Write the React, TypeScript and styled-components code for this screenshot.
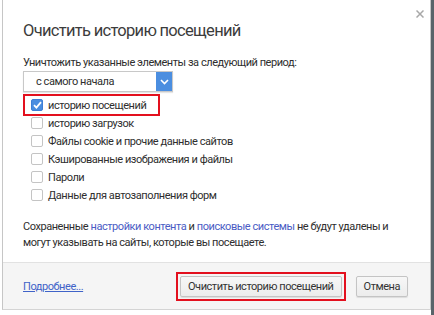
import styled, { createGlobalStyle } from 'styled-components';

const GlobalStyle = createGlobalStyle`
  body {
    margin: 0;
    background: #fff;
    font-family: Roboto, 'Liberation Sans', sans-serif;
    font-size: 11px;
    letter-spacing: -0.45px;
  }
`;

const items = [
  { label: 'историю посещений', checked: true, highlight: true },
  { label: 'историю загрузок', checked: false },
  { label: 'Файлы cookie и прочие данные сайтов', checked: false },
  { label: 'Кэшированные изображения и файлы', checked: false },
  { label: 'Пароли', checked: false },
  { label: 'Данные для автозаполнения форм', checked: false },
];

function CheckMark() {
  return (
    <svg width='9' height='8' viewBox='0 0 9 8'>
      <path d='M1 4.2 L3.4 6.6 L8 1.2' stroke='#fff' strokeWidth='1.8' fill='none' />
    </svg>
  );
}

function App() {
  return (
    <Page>
      <GlobalStyle />
      <Dialog>
        <CloseBtn aria-label='close'>
          <svg width='8' height='8' viewBox='0 0 8 8'>
            <path d='M0.5 0.5 L7.5 7.5 M7.5 0.5 L0.5 7.5' stroke='#a8a8a8' strokeWidth='1.5' />
          </svg>
        </CloseBtn>
        <Body>
          <Title>Очистить историю посещений</Title>
          <Label>Уничтожить указанные элементы за следующий период:</Label>
          <Select>
            <span>с самого начала</span>
            <Arrow>
              <svg width='9' height='6' viewBox='0 0 9 6'>
                <path d='M1 1 L4.5 4.5 L8 1' stroke='#fff' strokeWidth='1.6' fill='none' />
              </svg>
            </Arrow>
          </Select>
          <List>
            {items.map(item => (
              <Row key={item.label} $highlight={!!item.highlight}>
                <Box $checked={item.checked}>{item.checked && <CheckMark />}</Box>
                {item.label}
              </Row>
            ))}
          </List>
          <Info>
            Сохраненные <Link>настройки контента</Link> и <Link>поисковые системы</Link> не будут
            удалены и
            <br />
            могут указывать на сайты, которые вы посещаете.
          </Info>
        </Body>
        <Footer>
          <More>Подробнее...</More>
          <Buttons>
            <Highlight>
              <Button>Очистить историю посещений</Button>
            </Highlight>
            <Button>Отмена</Button>
          </Buttons>
        </Footer>
      </Dialog>
    </Page>
  );
}

export default App;

const Page = styled.div`
  display: flex;
  height: 315px;
  background: linear-gradient(to right, #fff 0 431px, #59646a 431px);
`;

const Dialog = styled.div`
  position: relative;
  margin-left: 2px;
  width: 427px;
  height: 309px;
  background: #fff;
  border-left: 1px solid #c6c6c6;
  border-right: 1px solid #c6c6c6;
  border-bottom: 1px solid #d4d4d4;
  display: flex;
  flex-direction: column;
`;

const CloseBtn = styled.div`
  position: absolute;
  top: 10px;
  right: 6px;
  width: 8px;
  height: 8px;
  display: flex;
`;

const Body = styled.div`
  flex: 1;
  padding: 19px 20px 0 20px;
  color: #2e2e2e;
`;

const Title = styled.h1`
  margin: 0;
  font-size: 16.5px;
  letter-spacing: -0.7px;
  font-weight: 400;
  line-height: 24px;
  color: #3c3c3c;
`;

const Label = styled.div`
  margin-top: 12px;
  line-height: 15px;
`;

const Select = styled.div`
  margin-top: 1px;
  width: 148px;
  height: 19px;
  border: 1px solid #c8c8c8;
  display: flex;
  align-items: center;
  justify-content: space-between;
  box-shadow: 0 1px 1px rgba(0, 0, 0, 0.1);
  span {
    padding-left: 12px;
  }
`;

const Arrow = styled.div`
  width: 16px;
  height: 100%;
  background: #4b8ee0;
  display: flex;
  align-items: center;
  justify-content: center;
`;

const List = styled.div`
  margin-top: 4px;
  display: flex;
  flex-direction: column;
`;

const Row = styled.div<{ $highlight: boolean }>`
  display: flex;
  align-items: center;
  gap: 5px;
  height: 18px;
  white-space: nowrap;
  margin-left: 2px;
  padding-left: 6px;
  width: ${props => (props.$highlight ? '127px' : 'auto')};
  outline: ${props => (props.$highlight ? '2px solid #e3101e' : 'none')};
`;

const Box = styled.div<{ $checked: boolean }>`
  width: 10px;
  height: 10px;
  border-radius: 2px;
  border: 1px solid ${props => (props.$checked ? '#3d7fd6' : '#c4c4c4')};
  background: ${props => (props.$checked ? '#4b8ee0' : '#fff')};
  display: flex;
  align-items: center;
  justify-content: center;
`;

const Info = styled.p`
  margin: 15px 0 0;
  line-height: 16px;
`;

const Link = styled.span`
  color: #4a5cc4;
`;

const Footer = styled.div`
  height: 46px;
  border-top: 1px solid #e2e2e2;
  background: #f5f5f5;
  display: flex;
  align-items: center;
  justify-content: space-between;
  padding: 0 22px 0 20px;
`;

const More = styled.span`
  color: #3f63c8;
  text-decoration: underline;
`;

const Buttons = styled.div`
  display: flex;
  align-items: center;
  gap: 10px;
`;

const Highlight = styled.div`
  border: 2px solid #e3101e;
  padding: 2px;
  display: flex;
`;

const Button = styled.button`
  font-family: inherit;
  font-size: 11px;
  letter-spacing: -0.45px;
  color: #333;
  height: 21px;
  padding: 0 7px;
  border: 1px solid #c4c4c4;
  border-radius: 2px;
  background: linear-gradient(#f7f7f7, #ececec);
  box-shadow: 0 1px 1px rgba(0, 0, 0, 0.1);
`;
